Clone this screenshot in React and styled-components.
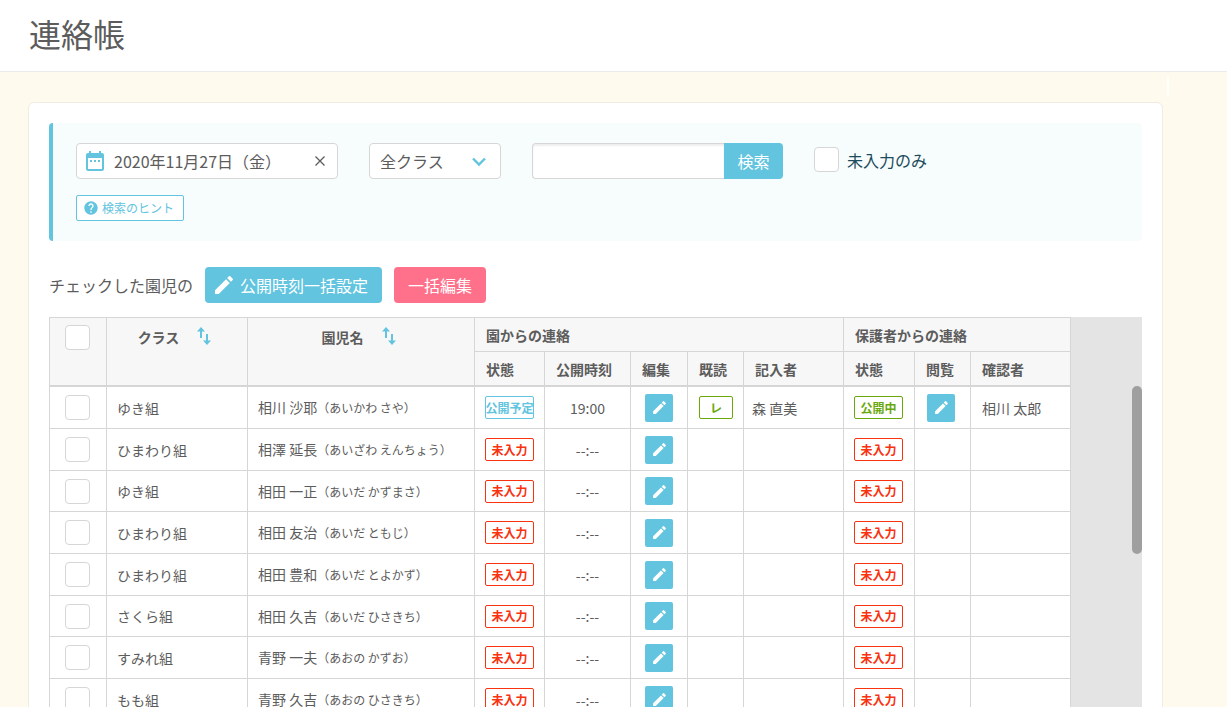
import styled, { createGlobalStyle, css } from 'styled-components'
import { MdDateRange, MdEdit, MdHelp } from 'react-icons/md'

const colors = {
	text: '#5c5c5c',
	blue: '#62c4de',
	pink: '#ff708a',
	green: '#6aa80e',
	red: '#f9320f',
	line: '#d6d6d6',
}

const GlobalStyle = createGlobalStyle`
	* {
		box-sizing: border-box;
	}

	body {
		margin: 0;
		color: ${colors.text};
		background-color: #fffaee;
		font-family: 'Noto Sans CJK JP', sans-serif;
		font-size: 16px;
		line-height: 24px;
	}

	button,
	input,
	select {
		margin: 0;
		color: inherit;
		font: inherit;
	}
`

const Page = styled.div`
	display: flex;
	flex-direction: column;
	height: 100vh;
	overflow: hidden;
`

const PageHead = styled.header`
	flex: none;
	padding: 9px 29px 14px;
	border-bottom: 1px solid #ebebeb;
	background-color: #fff;

	h1 {
		margin: 0;
		font-size: 32px;
		font-weight: 400;
		line-height: 48px;
	}
`

const PageBody = styled.main`
	position: relative;
	padding: 30px 64px 40px 28px;
`

const Marker = styled.span`
	position: absolute;
	top: 5px;
	right: 58px;
	width: 2px;
	height: 18px;
	background-color: #fff;
`

const Card = styled.section`
	padding: 20px;
	border: 1px solid #f0ece2;
	border-radius: 6px;
	background-color: #fff;
`

const SearchPanel = styled.form`
	padding: 20px 23px;
	border-left: 4px solid ${colors.blue};
	border-radius: 4px;
	background-color: #f7fdfd;
`

const SearchRow = styled.div`
	display: flex;
	align-items: flex-start;
	gap: 31px;
	margin-bottom: 16px;
`

const fieldBox = css`
	height: 36px;
	border: 1px solid ${colors.line};
	border-radius: 4px;
	background-color: #fff;
`

const DateField = styled.div`
	${fieldBox}
	display: flex;
	align-items: center;
	width: 262px;
	padding: 0 10px 0 6px;

	> svg {
		flex: none;
		color: ${colors.blue};
	}

	input {
		flex: 1;
		min-width: 0;
		padding: 0 0 0 7px;
		border: none;
		outline: none;
		background: none;
	}
`

const ClearButton = styled.button`
	display: flex;
	padding: 0;
	border: none;
	background: none;
`

const SelectField = styled.div`
	position: relative;

	select {
		${fieldBox}
		width: 132px;
		padding: 0 10px;
		appearance: none;
	}

	svg {
		position: absolute;
		top: 14px;
		right: 15px;
		pointer-events: none;
	}
`

const KeywordField = styled.div`
	display: flex;

	input {
		${fieldBox}
		width: 192px;
		border-right: none;
		border-radius: 4px 0 0 4px;
		box-shadow: inset 0 2px 2px #eee;
	}
`

const SearchButton = styled.button`
	width: 59px;
	padding: 0;
	border: none;
	border-radius: 0 4px 4px 0;
	color: #fff;
	background-color: ${colors.blue};
`

const CheckBox = styled.input`
	display: block;
	flex: none;
	width: 25px;
	height: 25px;
	margin: 0;
	border: 1px solid ${colors.line};
	border-radius: 4px;
	background-color: #fff;
	appearance: none;
`

const CheckLabel = styled.label`
	display: flex;
	align-items: center;
	gap: 8px;
	margin-top: 4px;
	color: #1c4b5c;
`

const HintButton = styled.button`
	display: flex;
	align-items: center;
	gap: 3px;
	height: 26px;
	padding: 0 9px 0 6px;
	border: 1px solid ${colors.blue};
	border-radius: 2px;
	color: ${colors.blue};
	background-color: #fff;
	font-size: 12px;
`

const BulkRow = styled.div`
	display: flex;
	align-items: center;
	gap: 12px;
	margin: 26px 0 14px;
`

const BulkButton = styled.button`
	display: flex;
	align-items: center;
	gap: 4px;
	height: 36px;
	padding: ${(props) => (props.$withIcon ? '0 14px 0 7px' : '0 14px')};
	border: none;
	border-radius: 4px;
	color: #fff;
	background-color: ${(props) => props.$color};
`

const TableArea = styled.div`
	position: relative;
	background-color: #e4e4e4;
`

const ScrollThumb = styled.div`
	position: absolute;
	top: 69px;
	right: 0;
	width: 10px;
	height: 168px;
	border-radius: 5px;
	background-color: #9f9f9f;
`

const Table = styled.table`
	table-layout: fixed;
	width: 1021px;
	border-collapse: separate;
	border-spacing: 0;
	border-right: 1px solid ${colors.line};
	background-color: #fff;
	font-size: 14px;
	line-height: 20px;
`

const Col = styled.col`
	width: ${(props) => props.$width}px;
`

const Th = styled.th`
	height: ${(props) => (props.$last ? 36 : 34)}px;
	padding: ${(props) => (props.rowSpan ? '7px' : '0')} ${(props) => props.$side ?? 11}px;
	border-top: 1px solid ${colors.line};
	border-left: 1px solid ${colors.line};
	border-bottom: ${(props) => (props.$last ? `2px solid ${colors.line}` : 'none')};
	background-color: #f7f7f7;
	text-align: left;
	vertical-align: ${(props) => (props.rowSpan ? 'top' : 'middle')};
	white-space: nowrap;
`

const SortHead = styled.div`
	display: flex;
	align-items: flex-start;
	justify-content: center;
	gap: 18px;
	padding-top: 2px;
	padding-right: 5px;
`

const SortButton = styled.button`
	display: flex;
	padding: 0;
	border: none;
	background: none;
`

const Td = styled.td`
	height: 42px;
	padding: 0 ${(props) => props.$side ?? 10}px;
	border-left: 1px solid ${colors.line};
	border-bottom: 1px solid ${colors.line};
	text-align: ${(props) => props.$align || 'left'};
	white-space: nowrap;

	tr:nth-child(3n) > & {
		height: 41px;
	}
`

const Kana = styled.span`
	font-size: 12px;
`

const badgeColors = {
	未入力: colors.red,
	公開予定: colors.blue,
}

const Badge = styled.span`
	display: flex;
	align-items: center;
	justify-content: center;
	width: ${(props) => (props.$small ? 34 : 49)}px;
	height: 23px;
	border: 1px solid ${(props) => props.$color};
	border-radius: 2px;
	color: ${(props) => props.$color};
	font-size: 12px;
	font-weight: 700;
`

const EditButton = styled.button`
	display: flex;
	align-items: center;
	justify-content: center;
	width: 28px;
	height: 28px;
	padding: 0;
	border: none;
	border-radius: 2px;
	color: #fff;
	background-color: ${colors.blue};
`

const SortIcon = () => (
	<svg width="14" height="18" viewBox="0 0 14 18" fill={colors.blue}>
		<path d="M4 0 8 4.500H5V11H3V4.500H0z" />
		<path d="M10 18 6 13.500H9V7h2v6.500h3z" />
	</svg>
)

const StateBadge = ({ state }) => <Badge $color={badgeColors[state] || colors.green}>{state}</Badge>

const Edit = ({ label }) => (
	<EditButton type="button" aria-label={label}>
		<MdEdit size={17} />
	</EditButton>
)

const columns = [57, 141, 227, 70, 86, 57, 56, 100, 71, 56, 100]

const children = [
	{
		group: 'ゆき組',
		name: '相川 沙耶',
		kana: 'あいかわ さや',
		state: '公開予定',
		time: '19:00',
		read: true,
		writer: '森 直美',
		parentState: '公開中',
		checker: '相川 太郎',
	},
	{ group: 'ひまわり組', name: '相澤 延長', kana: 'あいざわ えんちょう' },
	{ group: 'ゆき組', name: '相田 一正', kana: 'あいだ かずまさ' },
	{ group: 'ひまわり組', name: '相田 友治', kana: 'あいだ ともじ' },
	{ group: 'ひまわり組', name: '相田 豊和', kana: 'あいだ とよかず' },
	{ group: 'さくら組', name: '相田 久吉', kana: 'あいだ ひさきち' },
	{ group: 'すみれ組', name: '青野 一夫', kana: 'あおの かずお' },
	{ group: 'もも組', name: '青野 久吉', kana: 'あおの ひさきち' },
]

const ChildRow = ({ child }) => (
	<tr>
		<Td $side={15}>
			<CheckBox type="checkbox" aria-label={child.name} />
		</Td>
		<Td>{child.group}</Td>
		<Td>
			{child.name}
			<Kana>（{child.kana}）</Kana>
		</Td>
		<Td>
			<StateBadge state={child.state || '未入力'} />
		</Td>
		<Td $side={0} $align="center">
			{child.time || '--:--'}
		</Td>
		<Td $side={14}>
			<Edit label="編集" />
		</Td>
		<Td $side={11}>
			{child.read && (
				<Badge $small $color={colors.green}>
					レ
				</Badge>
			)}
		</Td>
		<Td $side={8}>{child.writer}</Td>
		<Td>
			<StateBadge state={child.parentState || '未入力'} />
		</Td>
		<Td $side={12}>{child.parentState && <Edit label="閲覧" />}</Td>
		<Td $side={11}>{child.checker}</Td>
	</tr>
)

const App = () => {
	return (
		<Page>
			<GlobalStyle />
			<PageHead>
				<h1>連絡帳</h1>
			</PageHead>
			<PageBody>
				<Marker />
				<Card>
					<SearchPanel onSubmit={(e) => e.preventDefault()}>
						<SearchRow>
							<DateField>
								<MdDateRange size={24} />
								<input type="text" aria-label="日付" defaultValue="2020年11月27日（金）" />
								<ClearButton type="button" aria-label="クリア">
									<svg width="14" height="14" viewBox="0 0 14 14" stroke={colors.text} strokeWidth="1.300">
										<path d="M2.500 2.500l9 9M11.500 2.500l-9 9" />
									</svg>
								</ClearButton>
							</DateField>
							<SelectField>
								<select aria-label="クラス">
									<option>全クラス</option>
								</select>
								<svg width="14" height="10" viewBox="0 0 14 10" fill="none" stroke={colors.blue} strokeWidth="2.400">
									<path d="M1 1.500l6 6 6-6" />
								</svg>
							</SelectField>
							<KeywordField>
								<input type="text" aria-label="キーワード" />
								<SearchButton type="submit">検索</SearchButton>
							</KeywordField>
							<CheckLabel>
								<CheckBox type="checkbox" />
								未入力のみ
							</CheckLabel>
						</SearchRow>
						<HintButton type="button">
							<MdHelp size={16} />
							検索のヒント
						</HintButton>
					</SearchPanel>

					<BulkRow>
						<span>チェックした園児の</span>
						<BulkButton type="button" $withIcon $color={colors.blue}>
							<MdEdit size={24} />
							公開時刻一括設定
						</BulkButton>
						<BulkButton type="button" $color={colors.pink}>
							一括編集
						</BulkButton>
					</BulkRow>

					<TableArea>
						<Table>
							<colgroup>
								{columns.map((width, i) => (
									<Col key={i} $width={width} />
								))}
							</colgroup>
							<thead>
								<tr>
									<Th rowSpan={2} $last $side={15}>
										<CheckBox type="checkbox" aria-label="すべて選択" />
									</Th>
									<Th rowSpan={2} $last>
										<SortHead>
											クラス
											<SortButton type="button" aria-label="クラスで並べ替え">
												<SortIcon />
											</SortButton>
										</SortHead>
									</Th>
									<Th rowSpan={2} $last>
										<SortHead>
											園児名
											<SortButton type="button" aria-label="園児名で並べ替え">
												<SortIcon />
											</SortButton>
										</SortHead>
									</Th>
									<Th colSpan={5}>園からの連絡</Th>
									<Th colSpan={3}>保護者からの連絡</Th>
								</tr>
								<tr>
									{['状態', '公開時刻', '編集', '既読', '記入者', '状態', '閲覧', '確認者'].map((title, i) => (
										<Th key={i} $last>
											{title}
										</Th>
									))}
								</tr>
							</thead>
							<tbody>
								{children.map((child, i) => (
									<ChildRow key={i} child={child} />
								))}
							</tbody>
						</Table>
						<ScrollThumb />
					</TableArea>
				</Card>
			</PageBody>
		</Page>
	)
}

export default App
